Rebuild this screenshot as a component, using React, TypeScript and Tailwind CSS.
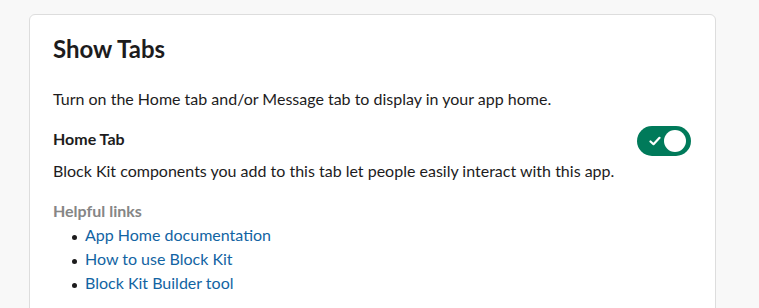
import React, { useState } from 'react';

const links = ['App Home documentation', 'How to use Block Kit', 'Block Kit Builder tool'];

const Toggle = ({ on, onChange }: { on: boolean; onChange: () => void }) => (
  <button
    onClick={onChange}
    className={`relative w-[54px] h-[30px] rounded-full shrink-0 ${on ? 'bg-[#007a5a]' : 'bg-[#868686]'}`}
  >
    {on && (
      <svg className="absolute left-[12px] top-[9px]" width="12" height="12" viewBox="0 0 12 12" fill="none">
        <path d="M1.5 6.5 L4.5 9.2 L10.5 2.8" stroke="white" strokeWidth="2.2" strokeLinecap="round" strokeLinejoin="round" />
      </svg>
    )}
    <span className={`absolute top-[4px] w-[22px] h-[22px] rounded-full bg-white ${on ? 'right-[5px]' : 'left-[4px]'}`} />
  </button>
);

export default function App() {
  const [homeOn, setHomeOn] = useState(true);

  return (
    <div className="w-[759px] h-[308px] bg-[#f8f8f8] overflow-hidden font-['Lato','Noto_Sans',sans-serif] text-[#1d1c1d]">
      <div className="ml-[29px] mt-[14px] w-[687px] h-[320px] bg-white border border-[#dddddd] rounded-[6px] pl-[23px] pr-[24px] pt-[19px]">
        <h2 className="text-[24px] leading-[30px] font-bold">Show Tabs</h2>

        <p className="mt-[24px] text-[16px] leading-[22px]">
          Turn on the Home tab and/or Message tab to display in your app home.
        </p>

        <div className="mt-[18px] h-[22px] flex items-start justify-between">
          <div className="text-[16px] leading-[22px] font-bold">Home Tab</div>
          <div className="-mt-[2px]">
            <Toggle on={homeOn} onChange={() => setHomeOn(!homeOn)} />
          </div>
        </div>
        <p className="mt-[10px] text-[16px] leading-[22px]">
          Block Kit components you add to this tab let people easily interact with this app.
        </p>

        <div className="mt-[18px] text-[16px] leading-[22px] font-bold text-[#868686]">Helpful links</div>
        <ul className="mt-[1px] text-[16px] leading-[24px]">
          {links.map((l) => (
            <li key={l} className="flex items-start">
              <span className="ml-[19px] mt-[12px] w-[5px] h-[5px] rounded-full bg-[#1d1c1d] shrink-0" />
              <a href="#" className="ml-[8px] text-[#1264a3]">{l}</a>
            </li>
          ))}
        </ul>
      </div>
    </div>
  );
}
